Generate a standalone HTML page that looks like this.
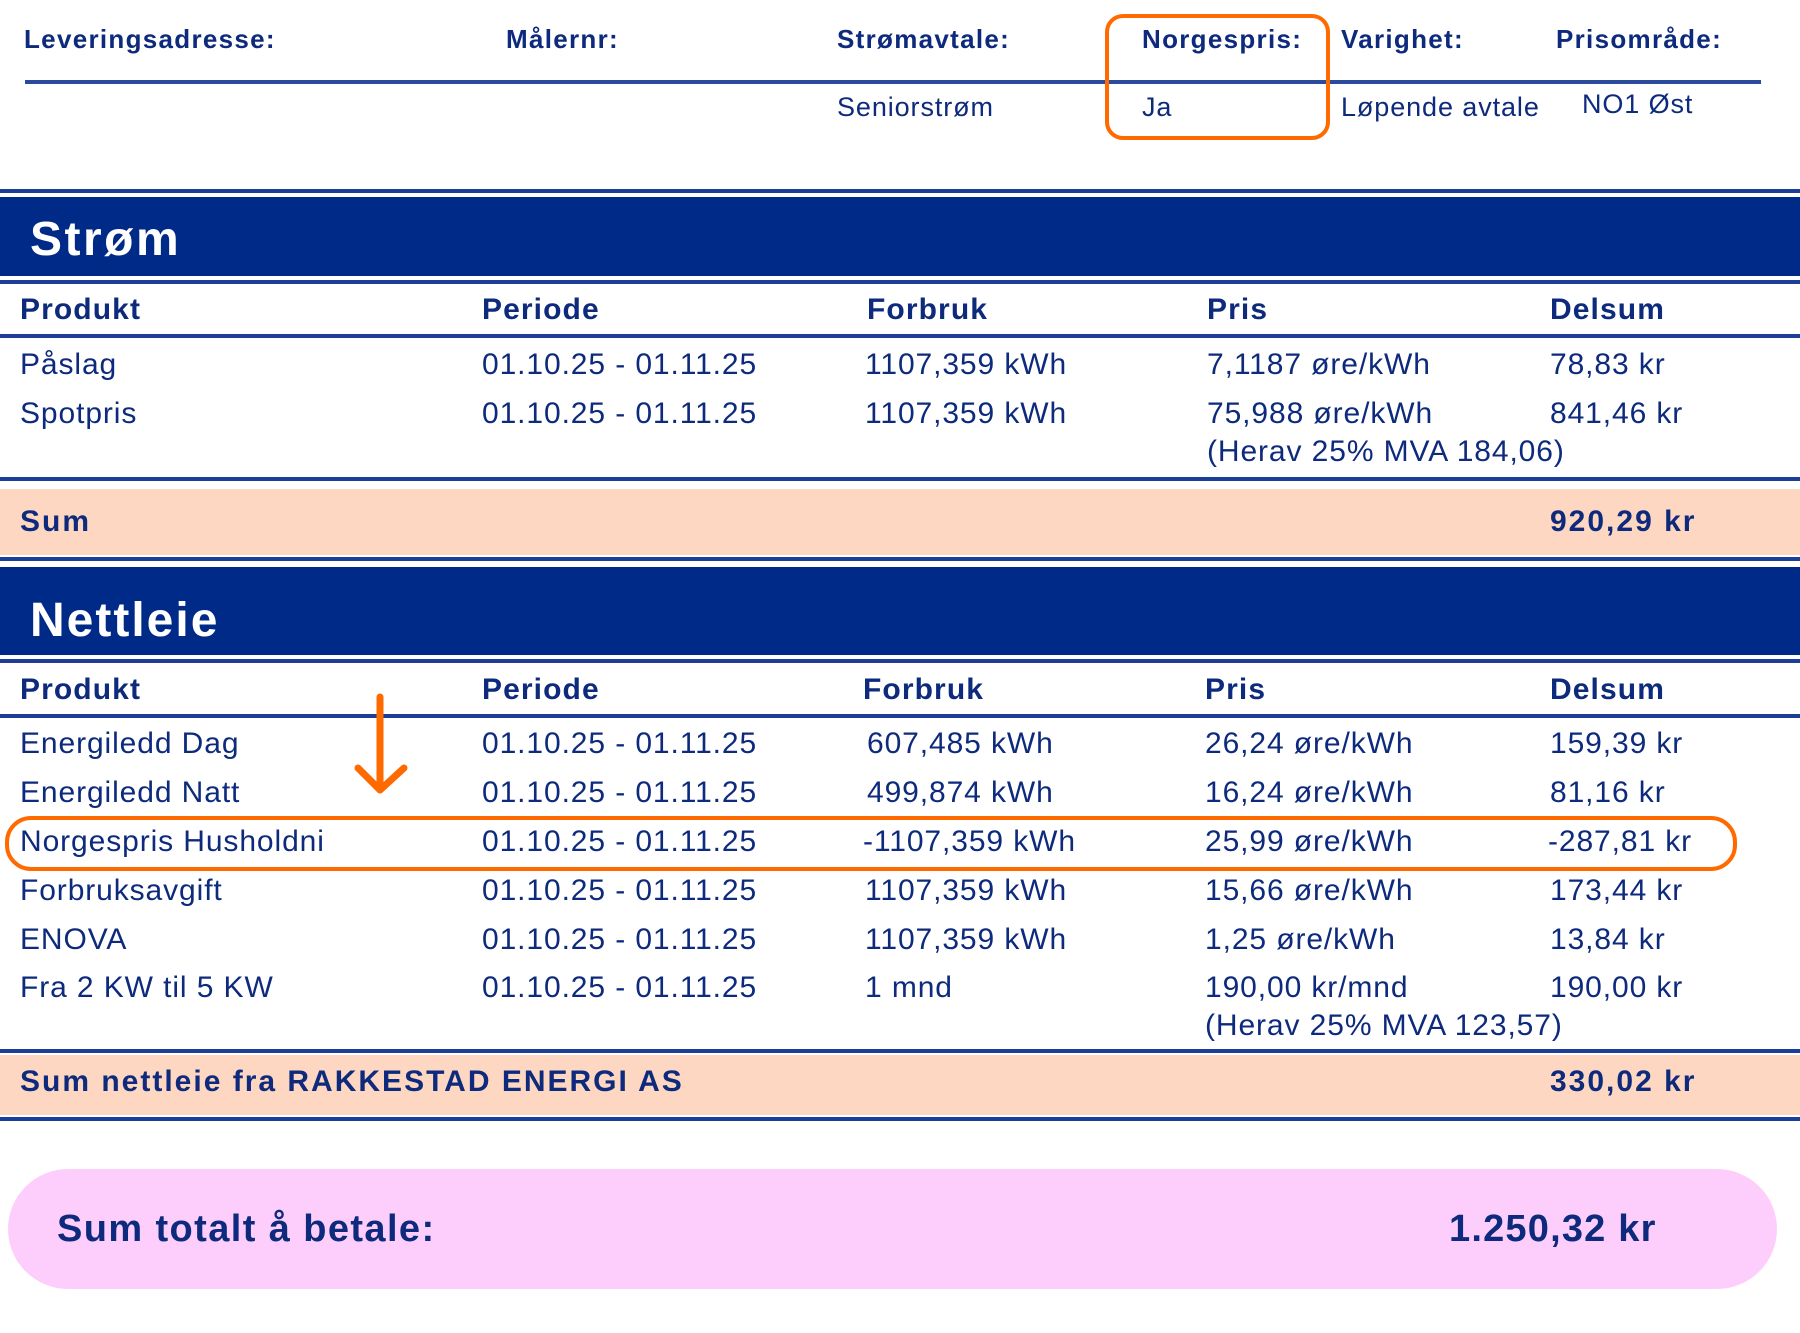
<!DOCTYPE html>
<html><head><meta charset="utf-8"><style>
body{margin:0;width:1800px;height:1333px;background:#fff;position:relative;overflow:hidden;font-family:"Liberation Sans",Arial,sans-serif;color:#0d2a7c}
.t{position:absolute;white-space:nowrap;line-height:1}
.h{font-weight:bold;font-size:26px;letter-spacing:1.3px}
.b{font-size:30px;letter-spacing:0.9px}
.bb{font-size:30px;font-weight:bold;letter-spacing:1.1px}
.s{font-size:30px;font-weight:bold;letter-spacing:2px}
.v{font-size:27px;letter-spacing:0.9px}
.ln{position:absolute;left:0;width:1800px;height:4px;background:#1c3e98}
.band{position:absolute;left:0;width:1800px;background:#002a87}
</style></head><body>
<!-- header -->
<div class="t h" style="left:24px;top:26px">Leveringsadresse:</div>
<div class="t h" style="left:506px;top:26px">Målernr:</div>
<div class="t h" style="left:837px;top:26px">Strømavtale:</div>
<div class="t h" style="left:1142px;top:26px">Norgespris:</div>
<div class="t h" style="left:1341px;top:26px">Varighet:</div>
<div class="t h" style="left:1556px;top:26px">Prisområde:</div>
<div style="position:absolute;left:25px;top:80px;width:1736px;height:4px;background:#2a4a9c"></div>
<div class="t v" style="left:837px;top:94px">Seniorstrøm</div>
<div class="t v" style="left:1142px;top:94px">Ja</div>
<div class="t v" style="left:1341px;top:94px">Løpende avtale</div>
<div class="t v" style="left:1582px;top:91px">NO1 Øst</div>
<div style="position:absolute;left:1105px;top:14px;width:217px;height:118px;border:4px solid #ff6a00;border-radius:18px"></div>

<!-- Strøm -->
<div class="ln" style="top:189px"></div>
<div class="band" style="top:197px;height:79px"></div>
<div class="t" style="left:30px;top:216px;font-size:48px;font-weight:bold;color:#fff;letter-spacing:2.5px">Strøm</div>
<div class="ln" style="top:280px"></div>
<div class="t bb" style="left:20px;top:295px">Produkt</div>
<div class="t bb" style="left:482px;top:295px">Periode</div>
<div class="t bb" style="left:867px;top:295px">Forbruk</div>
<div class="t bb" style="left:1207px;top:295px">Pris</div>
<div class="t bb" style="left:1550px;top:295px">Delsum</div>
<div class="ln" style="top:334px"></div>
<div class="t b" style="left:20px;top:350px">Påslag</div>
<div class="t b" style="left:482px;top:350px">01.10.25 - 01.11.25</div>
<div class="t b" style="left:865px;top:350px">1107,359 kWh</div>
<div class="t b" style="left:1207px;top:350px">7,1187 øre/kWh</div>
<div class="t b" style="left:1550px;top:350px">78,83 kr</div>
<div class="t b" style="left:20px;top:399px">Spotpris</div>
<div class="t b" style="left:482px;top:399px">01.10.25 - 01.11.25</div>
<div class="t b" style="left:865px;top:399px">1107,359 kWh</div>
<div class="t b" style="left:1207px;top:399px">75,988 øre/kWh</div>
<div class="t b" style="left:1550px;top:399px">841,46 kr</div>
<div class="t b" style="left:1207px;top:437px">(Herav 25% MVA 184,06)</div>
<div class="ln" style="top:477px"></div>
<div style="position:absolute;left:0;top:489px;width:1800px;height:66px;background:#fdd7c2"></div>
<div class="t s" style="left:20px;top:507px">Sum</div>
<div class="t s" style="left:1550px;top:507px">920,29 kr</div>
<div class="ln" style="top:557px"></div>

<!-- Nettleie -->
<div class="band" style="top:567px;height:88px"></div>
<div class="t" style="left:30px;top:597px;font-size:48px;font-weight:bold;color:#fff;letter-spacing:2px">Nettleie</div>
<div class="ln" style="top:659px"></div>
<div class="t bb" style="left:20px;top:675px">Produkt</div>
<div class="t bb" style="left:482px;top:675px">Periode</div>
<div class="t bb" style="left:863px;top:675px">Forbruk</div>
<div class="t bb" style="left:1205px;top:675px">Pris</div>
<div class="t bb" style="left:1550px;top:675px">Delsum</div>
<div class="ln" style="top:714px"></div>

<div class="t b" style="left:20px;top:729px">Energiledd Dag</div>
<div class="t b" style="left:482px;top:729px">01.10.25 - 01.11.25</div>
<div class="t b" style="left:867px;top:729px">607,485 kWh</div>
<div class="t b" style="left:1205px;top:729px">26,24 øre/kWh</div>
<div class="t b" style="left:1550px;top:729px">159,39 kr</div>

<div class="t b" style="left:20px;top:778px">Energiledd Natt</div>
<div class="t b" style="left:482px;top:778px">01.10.25 - 01.11.25</div>
<div class="t b" style="left:867px;top:778px">499,874 kWh</div>
<div class="t b" style="left:1205px;top:778px">16,24 øre/kWh</div>
<div class="t b" style="left:1550px;top:778px">81,16 kr</div>

<div class="t b" style="left:20px;top:827px">Norgespris Husholdni</div>
<div class="t b" style="left:482px;top:827px">01.10.25 - 01.11.25</div>
<div class="t b" style="left:863px;top:827px">-1107,359 kWh</div>
<div class="t b" style="left:1205px;top:827px">25,99 øre/kWh</div>
<div class="t b" style="left:1548px;top:827px">-287,81 kr</div>

<div class="t b" style="left:20px;top:876px">Forbruksavgift</div>
<div class="t b" style="left:482px;top:876px">01.10.25 - 01.11.25</div>
<div class="t b" style="left:865px;top:876px">1107,359 kWh</div>
<div class="t b" style="left:1205px;top:876px">15,66 øre/kWh</div>
<div class="t b" style="left:1550px;top:876px">173,44 kr</div>

<div class="t b" style="left:20px;top:925px">ENOVA</div>
<div class="t b" style="left:482px;top:925px">01.10.25 - 01.11.25</div>
<div class="t b" style="left:865px;top:925px">1107,359 kWh</div>
<div class="t b" style="left:1205px;top:925px">1,25 øre/kWh</div>
<div class="t b" style="left:1550px;top:925px">13,84 kr</div>

<div class="t b" style="left:20px;top:973px">Fra 2 KW til 5 KW</div>
<div class="t b" style="left:482px;top:973px">01.10.25 - 01.11.25</div>
<div class="t b" style="left:865px;top:973px">1 mnd</div>
<div class="t b" style="left:1205px;top:973px">190,00 kr/mnd</div>
<div class="t b" style="left:1550px;top:973px">190,00 kr</div>
<div class="t b" style="left:1205px;top:1011px">(Herav 25% MVA 123,57)</div>

<div class="ln" style="top:1049px"></div>
<div style="position:absolute;left:0;top:1055px;width:1800px;height:60px;background:#fdd7c2"></div>
<div class="t s" style="left:20px;top:1067px">Sum nettleie fra RAKKESTAD ENERGI AS</div>
<div class="t s" style="left:1550px;top:1067px">330,02 kr</div>
<div class="ln" style="top:1117px"></div>

<div style="position:absolute;left:5px;top:816px;width:1724px;height:47px;border:4px solid #ff6a00;border-radius:26px"></div>
<svg style="position:absolute;left:350px;top:690px" width="70" height="110"><path d="M30 7 V100 M8 78 L30 100 L54 78" fill="none" stroke="#ff6a00" stroke-width="7" stroke-linecap="round" stroke-linejoin="round"/></svg>

<div style="position:absolute;left:8px;top:1169px;width:1769px;height:120px;background:#fdcefb;border-radius:60px"></div>
<div class="t" style="left:57px;top:1210px;font-size:38px;font-weight:bold;letter-spacing:1.4px">Sum totalt å betale:</div>
<div class="t" style="left:1449px;top:1210px;font-size:38px;font-weight:bold;letter-spacing:1.2px">1.250,32 kr</div>
</body></html>
